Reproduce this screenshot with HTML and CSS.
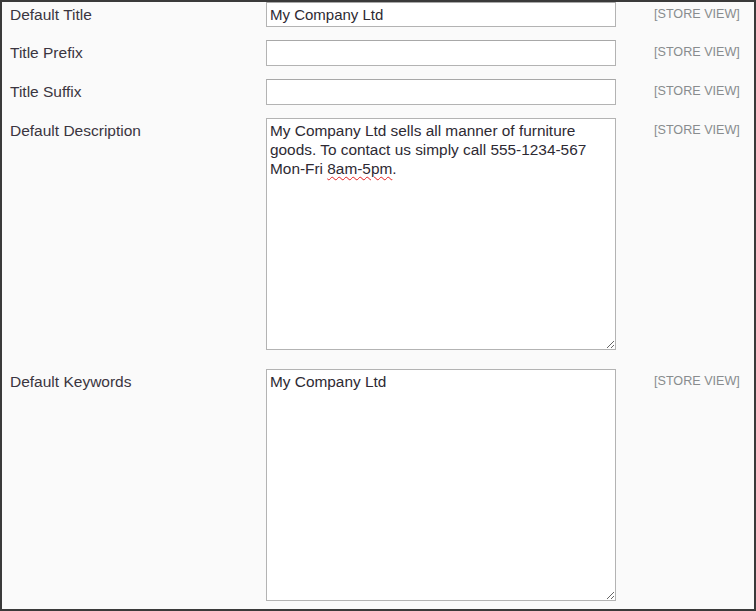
FILE: index.html
```html
<!DOCTYPE html>
<html lang="en">
<head>
    <meta charset="UTF-8">
    <meta name="viewport" content="width=device-width, initial-scale=1.0">
    <title>Design Settings</title>
    <link rel="stylesheet" href="styles.css">
</head>
<body>
    <div class="panel">
        <div class="row">
            <label class="label" for="defaultTitle">Default Title</label>
            <div class="field">
                <input class="input-text" type="text" id="defaultTitle" value="My Company Ltd">
            </div>
            <span class="scope">[STORE VIEW]</span>
        </div>
        <div class="row">
            <label class="label" for="titlePrefix">Title Prefix</label>
            <div class="field">
                <input class="input-text" type="text" id="titlePrefix">
            </div>
            <span class="scope">[STORE VIEW]</span>
        </div>
        <div class="row">
            <label class="label" for="titleSuffix">Title Suffix</label>
            <div class="field">
                <input class="input-text" type="text" id="titleSuffix">
            </div>
            <span class="scope">[STORE VIEW]</span>
        </div>
        <div class="row">
            <label class="label" for="defaultDescription">Default Description</label>
            <div class="field">
                <!-- editable box so the spell check marks can be shown -->
                <div class="textarea" id="defaultDescription" contenteditable="true" spellcheck="true">My Company Ltd sells all manner of furniture goods. To contact us simply call 555-1234-567 Mon-Fri <span class="misspelled">8am-5pm</span>.</div>
            </div>
            <span class="scope">[STORE VIEW]</span>
        </div>
        <div class="row row-last">
            <label class="label" for="defaultKeywords">Default Keywords</label>
            <div class="field">
                <div class="textarea" id="defaultKeywords" contenteditable="true">My Company Ltd</div>
            </div>
            <span class="scope">[STORE VIEW]</span>
        </div>
    </div>
</body>
</html>
```

FILE: styles.css
```css
html, body {
    margin: 0;
    padding: 0;
}
body {
    font-family: "Liberation Sans", Arial, sans-serif;
    font-size: 15px;
    color: #333;
}
.panel {
    box-sizing: border-box;
    width: 756px;
    height: 611px;
    border: 2px solid #3a3a3a;
    background-color: #fafafa;
    overflow: hidden;
}
.row {
    display: flex;
    align-items: flex-start;
    margin-bottom: 13px;
}
.row:nth-child(4) {
    margin-bottom: 19px;
}
.label {
    width: 256px;
    padding-left: 8px;
    line-height: 25px;
    font-size: 15.5px;
    color: #3a3540;
}
.field {
    width: 350px;
}
.scope {
    margin-left: 38px;
    line-height: 24px;
    font-size: 12.6px;
    color: #888c8e;
}
.input-text {
    box-sizing: border-box;
    display: block;
    width: 350px;
    height: 26px;
    margin: 0;
    padding: 0 3px;
    border: 1px solid #b3b3b3;
    border-top-color: #a8a8a8;
    background: #fff;
    font-family: "Liberation Sans", Arial, sans-serif;
    font-size: 15px;
    color: #2e2a33;
    outline: none;
}
.row:first-child .input-text {
    height: 25px;
}
.textarea {
    box-sizing: border-box;
    width: 350px;
    height: 232px;
    padding: 2px 4px 3px 3px;
    border: 1px solid #b3b3b3;
    background: #fff;
    font-size: 15.4px;
    line-height: 19px;
    color: #2e2a33;
    overflow: auto;
    resize: vertical;
    outline: none;
}
.misspelled {
    text-decoration: underline wavy #e02020;
    text-decoration-thickness: 1px;
    text-underline-offset: 2px;
}
```
